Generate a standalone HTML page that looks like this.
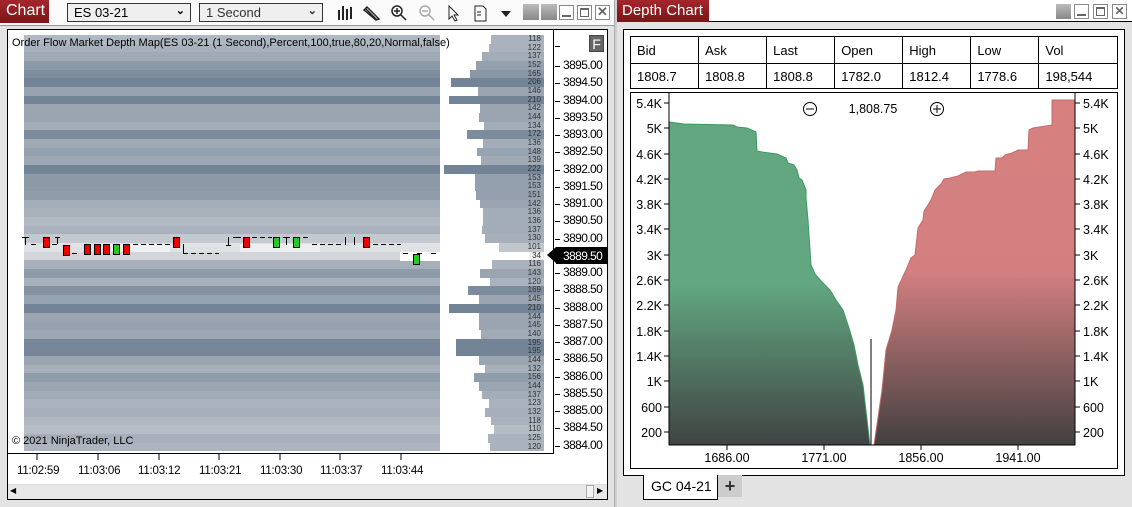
<!DOCTYPE html>
<html><head><meta charset="utf-8"><style>
*{box-sizing:border-box;margin:0;padding:0}
body{width:1132px;height:507px;background:#e3e3e3;font-family:"Liberation Sans",sans-serif;position:relative;overflow:hidden;font-size:12px;color:#000}
.abs{position:absolute}
.tab{background:linear-gradient(#a3262b,#7d1417);color:#fff;font-size:16px;padding:2px 6px;height:23px;white-space:nowrap}
.dd{border:1px solid #333;background:#efefef;height:19px;font-size:13px;padding:1px 6px}
.dd span{position:absolute;right:5px;top:0;font-size:11px;font-weight:bold}
.wb{width:15px;height:15px;border:1px solid #888;background:#fff}
.hm div,.bars div{height:8.68px}
.bars div{position:relative}
.bars b{position:absolute;right:0;top:0;height:100%}
.bars i{position:absolute;right:3px;top:-1px;font-style:normal;font-size:8px;color:#333;line-height:9px}
.pl{position:absolute;left:563px;font-size:12px;letter-spacing:-0.6px}
.pl:before{content:"";position:absolute;left:-8px;top:8px;width:5px;border-top:1px solid #000}
.r{width:7px;height:11px;background:#e00;border:1px solid #000;position:absolute}
.g{width:7px;height:11px;background:#2c2;border:1px solid #000;position:absolute}
.dash{position:absolute;height:1px;background:#000}
table{border-collapse:collapse;font-size:13px}
td{border:1px solid #000;padding:0 0 0 6px;height:25px}
.tl{position:absolute;top:465px;font-size:11.5px;letter-spacing:-0.2px}
</style></head><body>
<!-- left window -->
<div class="abs" style="left:0;top:0;width:615px;height:26px;background:#fafafa;border-bottom:1px solid #999"></div>
<div class="abs tab" style="left:0;top:0;width:49px">Chart</div>
<div class="abs dd" style="left:67px;top:3px;width:124px">ES 03-21<span>&#8964;</span></div>
<div class="abs dd" style="left:199px;top:3px;width:124px;color:#333">1 Second<span>&#8964;</span></div>
<svg class="abs" style="left:334px;top:3px" width="200" height="20">
<g stroke="#222" stroke-width="2"><line x1="5" y1="7" x2="5" y2="17"/><line x1="9" y1="3" x2="9" y2="17"/><line x1="13" y1="6" x2="13" y2="17"/><line x1="17" y1="4" x2="17" y2="16"/></g>
<path d="M31 5l12 12M30 7l3-3 12 12-3 1z" stroke="#222" fill="none" stroke-width="1.5"/>
<circle cx="63" cy="8" r="5" stroke="#222" fill="none" stroke-width="1.5"/><path d="M67 12l5 5M60 8h6M63 5v6" stroke="#222" stroke-width="1.5"/>
<circle cx="91" cy="8" r="5" stroke="#aaa" fill="none" stroke-width="1.5"/><path d="M95 12l5 5M88 8h6" stroke="#aaa" stroke-width="1.5"/>
<path d="M115 3v13l3-3 3 5 2-1-3-5h4z" stroke="#222" fill="#fff"/>
<path d="M141 3h8l3 3v12h-11z" stroke="#222" fill="none"/><path d="M143 9h4M143 12h4" stroke="#222"/>
<path d="M167 8h10l-5 6z" fill="#222"/></svg>
<div class="abs" style="left:523px;top:4px;width:16px;height:16px;background:linear-gradient(#bbb,#888)"></div>
<div class="abs" style="left:541px;top:4px;width:16px;height:16px;background:linear-gradient(#bbb,#888)"></div>
<div class="abs wb" style="left:559px;top:5px"><div style="position:absolute;left:2px;bottom:2px;width:9px;border-top:2px solid #666"></div></div>
<div class="abs wb" style="left:577px;top:5px"><div style="position:absolute;left:2px;top:2px;width:9px;height:9px;border:1px solid #666;border-top-width:2px"></div></div>
<div class="abs wb" style="left:595px;top:5px;font-size:13px;line-height:12px;text-align:center;color:#666;font-weight:bold">✕</div>
<div class="abs" style="left:614px;top:0;width:3px;height:507px;background:#d0d0d0;border-left:1px solid #aaa"></div>

<div class="abs" style="left:7px;top:29px;width:601px;height:471px;background:#fff;border:1px solid #000"></div>
<div class="abs" style="left:8px;top:30px;height:424px;border-bottom:1px solid #000;border-right:1px solid #000;width:546px"></div>
<!-- heatmap -->
<div class="abs hm" style="left:24px;top:35px;width:416px">
<div style="background:#b0b8c1"></div><div style="background:#a8b1bb"></div><div style="background:#a0aab5"></div><div style="background:#8b98a6"></div><div style="background:#7e8d9d"></div><div style="background:#738496"></div><div style="background:#97a3b0"></div><div style="background:#738496"></div><div style="background:#9ba6b2"></div><div style="background:#9aa5b1"></div><div style="background:#a3adb8"></div><div style="background:#7d8c9c"></div><div style="background:#a0aab5"></div><div style="background:#95a1ae"></div><div style="background:#9ea8b4"></div><div style="background:#738496"></div><div style="background:#8c99a7"></div><div style="background:#8c99a7"></div><div style="background:#8f9caa"></div><div style="background:#a4aeb9"></div><div style="background:#a9b2bc"></div><div style="background:#b1b9c2"></div><div style="background:#aab3bd"></div><div style="background:#c4c9cf"></div><div style="background:#dfe2e5"></div><div style="background:#d2d6db"></div><div style="background:#a7b0ba"></div><div style="background:#8e9ba9"></div><div style="background:#a9b2bc"></div><div style="background:#8391a1"></div><div style="background:#97a3b0"></div><div style="background:#738496"></div><div style="background:#9aa5b1"></div><div style="background:#97a3b0"></div><div style="background:#9ea8b4"></div><div style="background:#778799"></div><div style="background:#778799"></div><div style="background:#9aa5b1"></div><div style="background:#a6afba"></div><div style="background:#8f9caa"></div><div style="background:#9aa5b1"></div><div style="background:#a2acb7"></div><div style="background:#abb4be"></div><div style="background:#a6afba"></div><div style="background:#b0b8c1"></div><div style="background:#b6bdc6"></div><div style="background:#a7b0ba"></div><div style="background:#acb5bf"></div>
</div>
<div class="abs" style="left:110px;top:244px;width:60px;height:8px;background:#f0f1f2"></div>
<div class="abs" style="left:240px;top:244px;width:80px;height:8px;background:#eceef0"></div>
<div class="abs" style="left:400px;top:252px;width:40px;height:9px;background:#fff"></div>
<div class="abs" style="left:12px;top:37px;font-size:11px">Order Flow Market Depth Map(ES 03-21 (1 Second),Percent,100,true,80,20,Normal,false)</div>
<div class="abs" style="left:12px;top:435px;font-size:11px">© 2021 NinjaTrader, LLC</div>
<!-- markers -->
<div class="r" style="left:43px;top:237px"></div><div class="r" style="left:63px;top:245px"></div><div class="r" style="left:84px;top:244px"></div><div class="r" style="left:94px;top:244px"></div><div class="r" style="left:103px;top:244px"></div><div class="g" style="left:113px;top:244px"></div><div class="r" style="left:123px;top:244px"></div><div class="r" style="left:173px;top:237px"></div><div class="r" style="left:243px;top:237px"></div><div class="g" style="left:273px;top:237px"></div><div class="g" style="left:293px;top:237px"></div><div class="r" style="left:363px;top:237px"></div><div class="g" style="left:413px;top:254px"></div>
<div class="dash" style="left:22px;top:237px;width:7px"></div><div class="dash" style="left:25px;top:237px;width:1px;height:8px"></div>
<div class="dash" style="left:31px;top:244px;width:5px"></div><div class="dash" style="left:52px;top:244px;width:5px"></div>
<div class="dash" style="left:57px;top:237px;width:1px;height:7px"></div><div class="dash" style="left:55px;top:237px;width:5px"></div>
<div class="dash" style="left:72px;top:253px;width:5px"></div>
<div class="dash" style="left:133px;top:244px;width:38px;background:repeating-linear-gradient(90deg,#000 0 5px,transparent 5px 8px)"></div>
<div class="dash" style="left:183px;top:244px;width:1px;height:9px"></div>
<div class="dash" style="left:183px;top:253px;width:36px;background:repeating-linear-gradient(90deg,#000 0 5px,transparent 5px 8px)"></div>
<div class="dash" style="left:228px;top:237px;width:1px;height:8px"></div><div class="dash" style="left:226px;top:245px;width:5px"></div>
<div class="dash" style="left:233px;top:237px;width:8px"></div>
<div class="dash" style="left:252px;top:237px;width:20px;background:repeating-linear-gradient(90deg,#000 0 5px,transparent 5px 8px)"></div>
<div class="dash" style="left:283px;top:237px;width:7px"></div><div class="dash" style="left:286px;top:237px;width:1px;height:8px"></div>
<div class="dash" style="left:303px;top:237px;width:5px"></div>
<div class="dash" style="left:312px;top:244px;width:32px;background:repeating-linear-gradient(90deg,#000 0 5px,transparent 5px 8px)"></div>
<div class="dash" style="left:345px;top:237px;width:1px;height:8px"></div><div class="dash" style="left:354px;top:237px;width:1px;height:8px"></div>
<div class="dash" style="left:373px;top:244px;width:28px;background:repeating-linear-gradient(90deg,#000 0 5px,transparent 5px 8px)"></div>
<div class="dash" style="left:403px;top:253px;width:37px;background:repeating-linear-gradient(90deg,#000 0 5px,transparent 5px 14px)"></div>
<!-- bars -->
<div class="abs bars" style="left:430px;top:35px;width:114px">
<div><b style="width:53px;background:#aab3bd"></b><i>118</i></div><div><b style="width:55px;background:#aab3bd"></b><i>122</i></div><div><b style="width:62px;background:#a3adb8"></b><i>137</i></div><div><b style="width:68px;background:#94a0ae"></b><i>152</i></div><div><b style="width:74px;background:#8a97a6"></b><i>165</i></div><div><b style="width:93px;background:#738496"></b><i>206</i></div><div><b style="width:66px;background:#9aa5b1"></b><i>146</i></div><div><b style="width:95px;background:#738496"></b><i>210</i></div><div><b style="width:64px;background:#9aa5b1"></b><i>142</i></div><div><b style="width:65px;background:#9aa5b1"></b><i>144</i></div><div><b style="width:60px;background:#a3adb8"></b><i>134</i></div><div><b style="width:77px;background:#7d8c9c"></b><i>172</i></div><div><b style="width:61px;background:#a3adb8"></b><i>136</i></div><div><b style="width:67px;background:#97a3b0"></b><i>148</i></div><div><b style="width:63px;background:#a0aab5"></b><i>139</i></div><div><b style="width:100px;background:#738496"></b><i>222</i></div><div><b style="width:69px;background:#94a0ae"></b><i>153</i></div><div><b style="width:69px;background:#94a0ae"></b><i>153</i></div><div><b style="width:68px;background:#94a0ae"></b><i>151</i></div><div><b style="width:64px;background:#9aa5b1"></b><i>142</i></div><div><b style="width:61px;background:#a3adb8"></b><i>136</i></div><div><b style="width:61px;background:#a3adb8"></b><i>136</i></div><div><b style="width:62px;background:#a3adb8"></b><i>137</i></div><div><b style="width:59px;background:#a6afba"></b><i>130</i></div><div><b style="width:45px;background:#c0c6cc"></b><i>101</i></div><div><b style="width:15px;background:#eee"></b><i>34</i></div><div><b style="width:52px;background:#aab3bd"></b><i>116</i></div><div><b style="width:64px;background:#9aa5b1"></b><i>143</i></div><div><b style="width:54px;background:#aab3bd"></b><i>120</i></div><div><b style="width:76px;background:#7d8c9c"></b><i>169</i></div><div><b style="width:65px;background:#9aa5b1"></b><i>145</i></div><div><b style="width:95px;background:#738496"></b><i>210</i></div><div><b style="width:65px;background:#9aa5b1"></b><i>144</i></div><div><b style="width:65px;background:#9aa5b1"></b><i>145</i></div><div><b style="width:63px;background:#a0aab5"></b><i>140</i></div><div><b style="width:88px;background:#738496"></b><i>195</i></div><div><b style="width:88px;background:#738496"></b><i>195</i></div><div><b style="width:65px;background:#9aa5b1"></b><i>144</i></div><div><b style="width:59px;background:#a6afba"></b><i>132</i></div><div><b style="width:70px;background:#8f9caa"></b><i>156</i></div><div><b style="width:65px;background:#9aa5b1"></b><i>144</i></div><div><b style="width:62px;background:#a3adb8"></b><i>137</i></div><div><b style="width:55px;background:#aab3bd"></b><i>123</i></div><div><b style="width:59px;background:#a6afba"></b><i>132</i></div><div><b style="width:53px;background:#aab3bd"></b><i>118</i></div><div><b style="width:50px;background:#b4bcc4"></b><i>110</i></div><div><b style="width:56px;background:#aab3bd"></b><i>125</i></div><div><b style="width:54px;background:#aab3bd"></b><i>120</i></div>
</div>
<div class="abs" style="left:589px;top:35px;width:15px;height:17px;background:#666;color:#fff;font-size:14px;text-align:center;line-height:17px;border:1px solid #444">F</div>
<div class="pl" style="top:38px;"></div>
<div class="pl" style="top:58px">3895.00</div><div class="pl" style="top:75px">3894.50</div><div class="pl" style="top:93px">3894.00</div><div class="pl" style="top:110px">3893.50</div><div class="pl" style="top:127px">3893.00</div><div class="pl" style="top:144px">3892.50</div><div class="pl" style="top:162px">3892.00</div><div class="pl" style="top:179px">3891.50</div><div class="pl" style="top:196px">3891.00</div><div class="pl" style="top:213px">3890.50</div><div class="pl" style="top:231px">3890.00</div>
<div class="abs" style="left:556px;top:247px;width:51px;height:17px;background:#000;color:#fff;font-size:12px;letter-spacing:-0.6px;padding:2px 0 0 7px">3889.50</div>
<div class="abs" style="left:547px;top:247px;width:0;height:0;border:8px solid transparent;border-right:9px solid #000;border-left:0"></div>
<div class="pl" style="top:265px">3889.00</div><div class="pl" style="top:282px">3888.50</div><div class="pl" style="top:300px">3888.00</div><div class="pl" style="top:317px">3887.50</div><div class="pl" style="top:334px">3887.00</div><div class="pl" style="top:351px">3886.50</div><div class="pl" style="top:369px">3886.00</div><div class="pl" style="top:386px">3885.50</div><div class="pl" style="top:403px">3885.00</div><div class="pl" style="top:420px">3884.50</div><div class="pl" style="top:438px">3884.00</div>
<!-- time axis -->
<svg class="abs" style="left:0;top:454px" width="560" height="8"><g stroke="#000"><line x1="37" y1="0" x2="37" y2="6"/><line x1="98" y1="0" x2="98" y2="6"/><line x1="159" y1="0" x2="159" y2="6"/><line x1="219" y1="0" x2="219" y2="6"/><line x1="280" y1="0" x2="280" y2="6"/><line x1="340" y1="0" x2="340" y2="6"/><line x1="401" y1="0" x2="401" y2="6"/></g></svg>
<div class="tl" style="left:17px">11:02:59</div>
<div class="tl" style="left:78px">11:03:06</div>
<div class="tl" style="left:138px">11:03:12</div>
<div class="tl" style="left:199px">11:03:21</div>
<div class="tl" style="left:260px">11:03:30</div>
<div class="tl" style="left:320px">11:03:37</div>
<div class="tl" style="left:381px">11:03:44</div>
<div class="abs" style="left:8px;top:484px;width:599px;height:15px;background:#e8e8e8;border-top:1px solid #ddd"></div>
<div class="abs" style="left:10px;top:486px;font-size:8px">◀</div>
<div class="abs" style="left:586px;top:485px;width:8px;height:13px;border:1px solid #aaa;background:#f4f4f4"></div>
<div class="abs" style="left:597px;top:486px;font-size:8px">▶</div>

<!-- right window -->
<div class="abs" style="left:617px;top:0;width:515px;height:22px;background:#fff;border-bottom:1px solid #000"></div>
<div class="abs tab" style="left:617px;top:0;width:92px;height:22px;font-size:15px;padding:2px 5px">Depth Chart</div>
<div class="abs" style="left:1056px;top:4px;width:15px;height:15px;background:linear-gradient(#bbb,#888)"></div>
<div class="abs wb" style="left:1074px;top:4px"><div style="position:absolute;left:2px;bottom:2px;width:9px;border-top:2px solid #666"></div></div>
<div class="abs wb" style="left:1093px;top:4px"><div style="position:absolute;left:2px;top:2px;width:9px;height:9px;border:1px solid #666;border-top-width:2px"></div></div>
<div class="abs wb" style="left:1112px;top:4px;font-size:12px;line-height:12px;text-align:center;color:#666;font-weight:bold">✕</div>
<div class="abs" style="left:623px;top:29px;width:502px;height:447px;background:#fff;border:1px solid #000"></div>
<table class="abs" style="left:630px;top:36px;width:488px">
<tr style="height:27px"><td>Bid</td><td>Ask</td><td>Last</td><td>Open</td><td>High</td><td>Low</td><td>Vol</td></tr>
<tr><td>1808.7</td><td>1808.8</td><td>1808.8</td><td>1782.0</td><td>1812.4</td><td>1778.6</td><td>198,544</td></tr></table>
<div class="abs" style="left:630px;top:92px;width:488px;height:377px;border:1px solid #000"></div>
<svg class="abs" style="left:623px;top:90px" width="502" height="380" viewBox="623 90 502 380">
<defs><linearGradient id="gg" x1="0" y1="0" x2="0" y2="1"><stop offset="0" stop-color="#62a780"/><stop offset="0.5" stop-color="#62a780"/><stop offset="1" stop-color="#404444"/></linearGradient>
<linearGradient id="rg" x1="0" y1="0" x2="0" y2="1"><stop offset="0" stop-color="#d78080"/><stop offset="0.5" stop-color="#d37f80"/><stop offset="1" stop-color="#434040"/></linearGradient></defs>
<path d="M669,122 684,124 733,125 737,127 747,128 756,132 757,151 762,152 777,154 786,158 788,163 794,165 797,170 799,178 802,180 806,190 806,198 808,220 811,265 815,274 821,281 830,290 836,300 843,310 849,328 854,345 858,365 863,385 870,445 669,445Z" fill="url(#gg)" stroke="#3a9a5e"/>
<path d="M874,445 882,390 886,350 892,330 896,310 898,287 906,270 911,258 915,255 918,228 923,220 924,211 928,205 931,200 935,190 938,187 941,184 944,179 950,178 958,176 966,172 975,172 978,171 995,171 996,158 1002,158 1005,155 1012,153 1018,150 1028,150 1029,130 1033,128 1052,125 1052,100 1075,100 1075,445Z" fill="url(#rg)" stroke="#c76a6a"/>
<line x1="871" y1="339" x2="871" y2="445" stroke="#000"/>
<g stroke="#000" fill="none"><line x1="669" y1="93" x2="669" y2="445"/><line x1="1075" y1="93" x2="1075" y2="445"/><line x1="669" y1="445" x2="1075" y2="445"/>
<circle cx="810" cy="109" r="6.5"/><line x1="806" y1="109" x2="814" y2="109"/><circle cx="937" cy="109" r="6.5"/><line x1="933" y1="109" x2="941" y2="109"/><line x1="937" y1="105" x2="937" y2="113"/>
<path d="M664 103h5M664 128h5M664 154h5M664 179h5M664 204h5M664 229h5M664 255h5M664 280h5M664 305h5M664 331h5M664 356h5M664 381h5M664 407h5M664 432h5"/>
<path d="M1075 103h5M1075 128h5M1075 154h5M1075 179h5M1075 204h5M1075 229h5M1075 255h5M1075 280h5M1075 305h5M1075 331h5M1075 356h5M1075 381h5M1075 407h5M1075 432h5"/>
<path d="M727 445v5M824 445v5M921 445v5M1018 445v5"/></g>
<g font-family="Liberation Sans" font-size="12.5" text-anchor="end"><text x="662" y="108">5.4K</text><text x="662" y="133">5K</text><text x="662" y="159">4.6K</text><text x="662" y="184">4.2K</text><text x="662" y="209">3.8K</text><text x="662" y="234">3.4K</text><text x="662" y="260">3K</text><text x="662" y="285">2.6K</text><text x="662" y="310">2.2K</text><text x="662" y="336">1.8K</text><text x="662" y="361">1.4K</text><text x="662" y="386">1K</text><text x="662" y="412">600</text><text x="662" y="437">200</text></g>
<g font-family="Liberation Sans" font-size="12.5"><text x="1083" y="108">5.4K</text><text x="1083" y="133">5K</text><text x="1083" y="159">4.6K</text><text x="1083" y="184">4.2K</text><text x="1083" y="209">3.8K</text><text x="1083" y="234">3.4K</text><text x="1083" y="260">3K</text><text x="1083" y="285">2.6K</text><text x="1083" y="310">2.2K</text><text x="1083" y="336">1.8K</text><text x="1083" y="361">1.4K</text><text x="1083" y="386">1K</text><text x="1083" y="412">600</text><text x="1083" y="437">200</text></g>
<g font-family="Liberation Sans" font-size="12.5" text-anchor="middle"><text x="873" y="113">1,808.75</text><text x="727" y="462">1686.00</text><text x="824" y="462">1771.00</text><text x="921" y="462">1856.00</text><text x="1018" y="462">1941.00</text></g>
</svg>
<div class="abs" style="left:643px;top:475px;width:75px;height:25px;background:#fff;border:1px solid #000;border-top:none;font-size:14px;padding:3px 0 0 7px">GC 04-21</div>
<div class="abs" style="left:718px;top:475px;width:24px;height:22px;background:#ccc;font-size:18px;font-weight:bold;text-align:center;line-height:22px;color:#333">+</div>
</body></html>
